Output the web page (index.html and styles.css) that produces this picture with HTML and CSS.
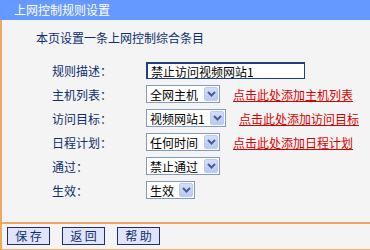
FILE: index.html
```html
<!DOCTYPE html>
<html lang="zh-CN">
<head>
    <meta charset="UTF-8">
    <title>上网控制规则设置</title>
    <link rel="stylesheet" href="styles.css">
</head>
<body>

    <div class="title">上网控制规则设置</div>

    <div class="panel">
        <div class="intro">本页设置一条上网控制综合条目</div>

        <div class="row">
            <span class="label">规则描述：</span>
            <span class="text-input">禁止访问视频网站1</span>
        </div>
        <div class="row">
            <span class="label">主机列表：</span>
            <span class="select w-74">全网主机<span class="arrow"><svg width="9" height="6" viewBox="0 0 9 6"><path d="M1 1 L4.5 4.5 L8 1" fill="none" stroke="#4a5f8c" stroke-width="2"/></svg></span></span>
            <a class="add-link" href="#">点击此处添加主机列表</a>
        </div>
        <div class="row">
            <span class="label">访问目标：</span>
            <span class="select w-80">视频网站1<span class="arrow"><svg width="9" height="6" viewBox="0 0 9 6"><path d="M1 1 L4.5 4.5 L8 1" fill="none" stroke="#4a5f8c" stroke-width="2"/></svg></span></span>
            <a class="add-link" href="#">点击此处添加访问目标</a>
        </div>
        <div class="row">
            <span class="label">日程计划：</span>
            <span class="select w-74">任何时间<span class="arrow"><svg width="9" height="6" viewBox="0 0 9 6"><path d="M1 1 L4.5 4.5 L8 1" fill="none" stroke="#4a5f8c" stroke-width="2"/></svg></span></span>
            <a class="add-link" href="#">点击此处添加日程计划</a>
        </div>
        <div class="row">
            <span class="label">通过：</span>
            <span class="select w-74">禁止通过<span class="arrow"><svg width="9" height="6" viewBox="0 0 9 6"><path d="M1 1 L4.5 4.5 L8 1" fill="none" stroke="#4a5f8c" stroke-width="2"/></svg></span></span>
        </div>
        <div class="row">
            <span class="label">生效：</span>
            <span class="select w-49">生效<span class="arrow"><svg width="9" height="6" viewBox="0 0 9 6"><path d="M1 1 L4.5 4.5 L8 1" fill="none" stroke="#4a5f8c" stroke-width="2"/></svg></span></span>
        </div>
    </div>

    <div class="buttons">
        <button class="btn">保 存</button>
        <button class="btn">返 回</button>
        <button class="btn">帮 助</button>
    </div>

</body>
</html>
```

FILE: styles.css
```css
body {
    margin: 0;
    background-color: #f4f4f4;
    font-family: "Noto Sans CJK SC", "DejaVu Sans", sans-serif;
    font-size: 12px;
    color: #0d2f6e;
}

.title {
    height: 20px;
    line-height: 20px;
    padding-left: 14px;
    background-color: #6699ff;
    color: #ffffff;
}

.panel {
    height: 202px;
    border-left: 2px solid #f0a860;
    box-sizing: border-box;
}

.intro {
    padding: 10px 0 0 34px;
    line-height: 16px;
    height: 16px;
    margin-bottom: 12px;
}

.row {
    display: flex;
    align-items: center;
    height: 24px;
    padding-left: 50px;
}

.label {
    width: 94px;
}

.text-input {
    box-sizing: border-box;
    width: 159px;
    height: 17px;
    line-height: 15px;
    padding-left: 3px;
    background-color: #ffffff;
    border: 1px solid #1f3f7e;
    border-top-width: 2px;
    border-left-width: 2px;
    color: #000000;
}

.select {
    box-sizing: border-box;
    display: flex;
    align-items: center;
    justify-content: space-between;
    height: 18px;
    padding: 0 1px 0 3px;
    background-color: #ffffff;
    border: 1px solid #7f9db9;
    color: #000000;
}

.w-74 { width: 74px; }
.w-80 { width: 80px; }
.w-49 { width: 49px; }

.arrow {
    box-sizing: border-box;
    display: flex;
    align-items: center;
    justify-content: center;
    width: 14px;
    height: 14px;
    background: linear-gradient(#d2defb, #b7caf5);
    border: 1px solid #b9c9ef;
    border-radius: 2px;
}

.add-link {
    margin-left: 13px;
    color: #d80000;
    text-decoration: underline;
}

.buttons {
    display: flex;
    gap: 12px;
    height: 28px;
    padding: 3px 0 0 5px;
    box-sizing: border-box;
    border-top: 2px solid #f0a860;
    border-bottom: 1px solid #f0a860;
    border-left: 2px solid #f0a860;
}

.btn {
    width: 43px;
    height: 18px;
    padding: 0;
    background-color: #e2e4fc;
    border: 1px solid #1c2f72;
    font-family: inherit;
    font-size: 12px;
    line-height: 16px;
    color: #0d2f6e;
}
```
